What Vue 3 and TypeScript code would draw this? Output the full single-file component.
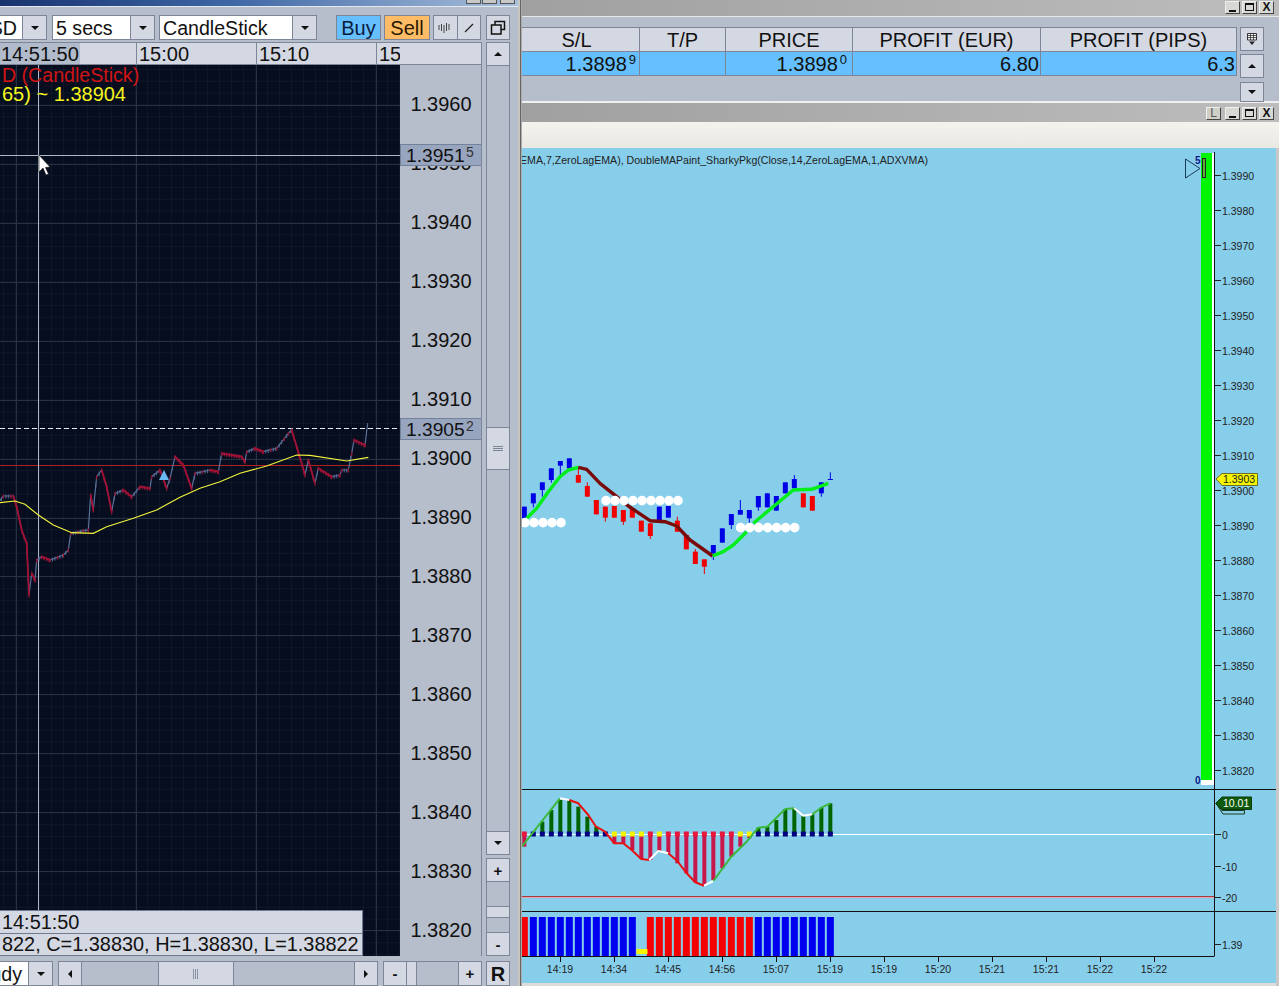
<template>
  <div class="screen">
    <!-- left chart window -->
    <div class="left-win">
      <div class="left-title">
        <div class="win-btns small"><span></span><span></span><span class="far"></span></div>
      </div>
      <div class="toolbar">
        <div class="combo sym"><span class="combo-text end">SD</span><span class="combo-arrow"><i class="down"></i></span></div>
        <div class="combo secs"><span class="combo-text pad">5 secs</span><span class="combo-arrow"><i class="down"></i></span></div>
        <div class="combo style"><span class="combo-text pad">CandleStick</span><span class="combo-arrow"><i class="down"></i></span></div>
        <button class="trade buy">Buy</button>
        <button class="trade sell">Sell</button>
        <div class="tools">
          <span class="tool">
            <svg width="14" height="12" viewBox="0 0 14 12"><path d="M1 3v5M3.500 2v7M6 3v8M8.500 1v8M11 2v6" stroke="#444" fill="none" /></svg>
          </span>
          <span class="tool">
            <svg width="12" height="12" viewBox="0 0 12 12"><path d="M2 10L10 2" stroke="#222" stroke-width="1.200" fill="none" /></svg>
          </span>
        </div>
        <span class="tool restore">
          <svg width="16" height="16" viewBox="0 0 16 16"><path d="M5 5V1.500H14.500V9.500H11M1.500 5H11V14H1.500Z" stroke="#111" stroke-width="1.500" fill="none" /></svg>
        </span>
      </div>
      <div class="chart-body">
        <div class="chart-col">
          <div class="time-row">
            <span class="time-cell hl">14:51:50</span>
            <span class="time-cell t2">15:00</span>
            <span class="time-cell t3">15:10</span>
            <span class="time-cell t4">15</span>
          </div>
          <div class="plot-row">
            <div class="plot">
              <svg class="plot-svg" width="400" height="891" viewBox="0 65 400 891">
                <defs>
                  <pattern id="minor" x="4" y="11" width="12" height="11.800" patternUnits="userSpaceOnUse">
                    <path d="M12 0V11.800M0 11.800H12" stroke="#16202f" fill="none" />
                  </pattern>
                </defs>
                <rect x="0" y="65" width="400" height="891" fill="#050d1e" />
                <rect x="0" y="65" width="400" height="891" fill="url(#minor)" />
                <path v-for="x in majorX" :key="x" :d="`M${x} 65V956`" stroke="#263242" />
                <path v-for="y in majorY" :key="y" :d="`M0 ${y}H400`" stroke="#263242" />
                <path d="M0 465.500H400" stroke="#b02020" />
                <path d="M0 428.500H400" stroke="#e8ecf4" stroke-dasharray="5 3" />
                <path d="M0 155.500H400" stroke="#aeb6c8" />
                <path d="M38.500 65V956" stroke="#aeb6c8" />
                <path :d="priceUp" stroke="#5c7199" stroke-width="1.200" fill="none" />
                <path :d="ticksUp" stroke="#566a92" stroke-width="1" fill="none" />
                <path :d="ticksDown" stroke="#8f1535" stroke-width="1.400" fill="none" />
                <path :d="priceDown" stroke="#a30f33" stroke-width="1.800" fill="none" />
                <polyline :points="maPoints" stroke="#f4f43c" stroke-width="1.100" fill="none" />
                <path d="M164 470L169 480H159Z" fill="#69b8f0" />
                <path d="M39 155V172L43 168L46 175L48.500 174L45.500 167.500L50 167Z" fill="#fff" stroke="#111" stroke-width="0.600" />
              </svg>
              <div class="legend">
                <div class="legend-red">D (CandleStick)</div>
                <div class="legend-yellow">65) ~ 1.38904</div>
              </div>
              <div class="tooltip">
                <div class="tip-row">14:51:50</div>
                <div class="tip-row">822, C=1.38830, H=1.38830, L=1.38822</div>
              </div>
            </div>
            <svg class="axis-svg" width="81" height="891" viewBox="400 65 81 891">
              <text v-for="t in priceLabels" :key="t.label" x="441" :y="t.y + 7" class="axis-text" text-anchor="middle">{{ t.label }}</text>
              <g v-for="b in priceBoxes" :key="b.y">
                <rect x="400.500" :y="b.y" width="81" height="21" fill="#98a5bf" stroke="#74819a" />
                <text x="406" :y="b.y + 17" class="axis-text box">{{ b.text }}</text>
                <text x="466" :y="b.y + 12" class="axis-sup">{{ b.sup }}</text>
              </g>
            </svg>
          </div>
        </div>
        <div class="vscroll">
          <span class="sbtn up"><i class="upa"></i></span>
          <div class="vtrack">
            <span class="vthumb"><svg width="12" height="6" viewBox="0 0 12 6"><path d="M1 .5H11M1 2.500H11M1 4.500H11" stroke="#7b8494" /></svg></span>
          </div>
          <span class="sbtn"><i class="down"></i></span>
          <span class="sbtn plus">+</span>
          <div class="ztrack"><span class="zthumb"></span></div>
          <span class="sbtn minus">-</span>
        </div>
      </div>
      <div class="bottom-row">
        <div class="combo study"><span class="combo-text end">udy</span><span class="combo-arrow"><i class="down"></i></span></div>
        <div class="hscroll">
          <span class="hbtn"><i class="lefta"></i></span>
          <div class="htrack">
            <span class="hthumb"><svg width="6" height="12" viewBox="0 0 6 12"><path d="M.5 1V11M2.500 1V11M4.500 1V11" stroke="#8a93a3" /></svg></span>
          </div>
          <span class="hbtn"><i class="righta"></i></span>
        </div>
        <div class="hzoom">
          <span class="hbtn bold">-</span>
          <span class="hz-small"></span>
          <span class="hz-fill"></span>
          <span class="hbtn bold">+</span>
        </div>
        <span class="rbtn">R</span>
      </div>
    </div>

    <div class="divider"></div>

    <div class="right-side">
      <!-- positions window -->
      <div class="title-bar top">
        <div class="win-btns"><span class="b-min"></span><span class="b-max"></span><span class="b-close">X</span></div>
      </div>
      <div class="positions">
        <div class="pos-table">
          <div class="pos-row head">
            <span v-for="c in columns" :key="c.name" class="pos-cell" :style="{ width: c.w + 'px' }">{{ c.name }}</span>
          </div>
          <div class="pos-row data">
            <span v-for="c in columns" :key="c.name" class="pos-cell" :style="{ width: c.w + 'px' }">{{ c.val }}<sup v-if="c.sup">{{ c.sup }}</sup></span>
          </div>
        </div>
        <div class="pos-side">
          <span class="pos-btn">
            <svg width="12" height="14" viewBox="0 0 12 14"><path d="M1.500 1.500H10.500V8H1.500Z" fill="#eee" stroke="#222" stroke-width="0.900" /><path d="M1.500 3.500H10.500M1.500 5.500H10.500M4.500 1.500V8M7.500 1.500V8" stroke="#222" stroke-width="0.700" fill="none" /><path d="M3 9.500H9L6 13Z" fill="#222" /></svg>
          </span>
          <span class="pos-btn mid"><i class="upa"></i></span>
          <span class="pos-btn low"><i class="down"></i></span>
        </div>
      </div>
      <!-- chart window -->
      <div class="title-bar second">
        <div class="win-btns"><span class="b-l">L</span><span class="b-min"></span><span class="b-max"></span><span class="b-close">X</span></div>
      </div>
      <div class="light-bar"></div>
      <svg class="main-svg" width="757" height="838" viewBox="522 148 757 838">
        <rect x="522" y="148" width="757" height="838" fill="#87ceeb" />
        <text x="520" y="164" class="study-title">{{ studyTitle }}</text>

        <!-- price panel -->
        <rect x="1201" y="153" width="11" height="627" fill="#00f500" />
        <rect x="1201" y="780" width="13" height="5" fill="#fff" />
        <rect x="1212" y="153" width="2" height="632" fill="#fff" />
        <path d="M1185.500 159L1200 168.500L1185.500 178Z" fill="none" stroke="#1b3a55" />
        <rect x="1202.500" y="158.500" width="3" height="19" fill="#5ab03a" stroke="#222" />
        <text x="1195" y="164" class="blue-num">5</text>
        <text x="1195" y="784" class="blue-num">0</text>

        <g v-for="c in candles" :key="c.x">
          <path :d="`M${c.x} ${c.wt}V${c.wb}`" :stroke="c.col" stroke-width="1" />
          <rect :x="c.x - 2.500" :y="c.t" width="5" :height="c.b - c.t" :fill="c.col" />
        </g>
        <polyline v-for="(l, i) in maLines" :key="i" :points="l.pts" :stroke="l.col" stroke-width="3.400" fill="none" stroke-linejoin="round" />
        <circle v-for="d in dots" :key="d.x + '-' + d.y" :cx="d.x" :cy="d.y" r="4.800" fill="#fff" />

        <!-- oscillator panel -->
        <path d="M522 789.500H1276M522 911.500H1276M522 956.500H1214" stroke="#111" />
        <path d="M522 834.500H1214" stroke="#fff" />
        <path d="M522 896.500H1214" stroke="#a83a3a" />
        <path d="M522 897.500H1214" stroke="#e59fb2" />
        <path v-for="h in hist" :key="h.x" :d="`M${h.x} ${h.y}V834`" :stroke="h.col" stroke-width="4" />
        <rect v-for="b in baseline" :key="b.x" :x="b.x - 2.500" y="831.500" width="5" height="5" :fill="b.col" />
        <polyline v-for="(l, i) in oscLines" :key="i" :points="l.pts" :stroke="l.col" stroke-width="2" fill="none" stroke-linejoin="round" />

        <!-- blocks -->
        <rect v-for="b in blocks" :key="b.x" :x="b.x - 3.500" y="917" width="7" height="39" :fill="b.col" />
        <rect x="636.500" y="949" width="11" height="5" fill="#f5f500" />

        <!-- y axis -->
        <path d="M1214.500 152V956.500" stroke="#111" />
        <g v-for="t in rightTicks" :key="t.label">
          <path :d="`M1215 ${t.y - 0.500}H1221`" stroke="#222" />
          <text x="1222" :y="t.y + 4" class="right-text">{{ t.label }}</text>
        </g>

        <!-- price tags -->
        <path d="M1216 479L1222 473.500H1257.500V485.500H1222Z" fill="#f5f500" stroke="#6b6b2a" />
        <text x="1223" y="483" class="tag-text">1.3903</text>
        <path d="M1216.500 804L1222 810.500H1244.500V814H1223Z" fill="none" stroke="#1d3a1d" />
        <path d="M1215.500 803.500L1222 797H1251.500V809.500H1222Z" fill="#0d5a0d" stroke="#0a3a0a" />
        <text x="1223" y="807" class="tag-text white">10.01</text>

        <!-- time axis -->
        <g v-for="t in timeTicks" :key="t.x">
          <path :d="`M${t.x + 0.500} 956V962`" stroke="#111" />
          <text :x="t.x" y="973" class="right-text" text-anchor="middle">{{ t.label }}</text>
        </g>
        <rect x="522" y="983" width="757" height="3" fill="#dcdcd8" />
        <rect x="1276" y="148" width="3" height="838" fill="#c8c8c8" />
      </svg>
    </div>
  </div>
</template>

<script setup lang="ts">
type Pt = [number, number]

const majorX = [16.5, 136.5, 256.5, 376.5]
const majorY = Array.from({ length: 15 }, (_, i) => Math.round(105 + i * 58.93) + 0.5)

// price trace, read off in zoomed coordinates (x/3, 410 + y/3)
const rawPrice: Pt[] = [
  [-3, 275], [10, 258], [40, 258], [50, 290], [65, 360], [80, 400], [87, 555], [95, 490], [105, 510], [110, 450],
  [125, 440], [150, 450], [190, 435], [205, 420], [212, 370], [250, 362], [265, 360], [272, 255], [280, 300], [290, 200],
  [305, 180], [320, 230], [335, 305], [345, 250], [370, 240], [395, 260], [420, 230], [450, 235], [455, 200], [480, 180],
  [500, 235], [510, 205], [525, 140], [550, 165], [575, 235], [585, 190], [630, 180], [655, 185], [665, 130], [725, 140],
  [735, 155], [740, 125], [765, 115], [790, 125], [830, 115], [865, 70], [875, 60], [890, 110], [915, 195], [925, 150],
  [945, 220], [955, 175], [995, 200], [1020, 195], [1025, 180], [1045, 180], [1055, 130], [1062, 90], [1095, 105], [1103, 40]
]
const price: Pt[] = rawPrice.map(([x, y]) => [x / 3, 410 + y / 3])

const priceUp = 'M' + price.map(p => p.join(' ')).join('L')
let down = ''
let tUp = ''
let tDown = ''
for (let i = 1; i < price.length; i++) {
  const [x0, y0] = price[i - 1]
  const [x1, y1] = price[i]
  if (y1 > y0) down += `M${x0} ${y0}L${x1} ${y1}`
  // little bars so the trace has the same busy look
  let n = 0
  for (let x = x0; x < x1; x += 2.5) {
    const y = y0 + ((y1 - y0) * (x - x0)) / (x1 - x0)
    const seg = `M${x.toFixed(1)} ${(y - 1.5).toFixed(1)}V${(y + 2.5).toFixed(1)}`
    if (n % 3 === 0 || y1 > y0) tDown += seg
    else tUp += seg
    n++
  }
}
const priceDown = down
const ticksUp = tUp
const ticksDown = tDown

const rawMa: Pt[] = [
  [0, 278], [45, 273], [75, 283], [115, 315], [160, 345], [215, 368], [280, 370], [320, 350], [400, 325], [470, 300],
  [540, 262], [600, 235], [660, 215], [720, 190], [800, 168], [890, 135], [930, 136], [1040, 153], [1105, 142]
]
const maPoints = rawMa.map(([x, y]) => `${x / 3},${410 + y / 3}`).join(' ')

const priceLabels = Array.from({ length: 15 }, (_, i) => ({
  label: (1.396 - i * 0.001).toFixed(4),
  y: 104.4 + i * 58.97
}))
const priceBoxes = [
  { y: 144.5, text: '1.3951', sup: '5' },
  { y: 418.5, text: '1.3905', sup: '2' }
]

const columns = [
  { name: 'S/L', w: 118, val: '1.3898', sup: '9' },
  { name: 'T/P', w: 86, val: '', sup: '' },
  { name: 'PRICE', w: 127, val: '1.3898', sup: '0' },
  { name: 'PROFIT (EUR)', w: 188, val: '6.80', sup: '' },
  { name: 'PROFIT (PIPS)', w: 196, val: '6.3', sup: '' }
]

const studyTitle = 'EMA,7,ZeroLagEMA), DoubleMAPaint_SharkyPkg(Close,14,ZeroLagEMA,1,ADXVMA)'

// zoom 4 coordinates: page = 520 + x/3, 450 + y/3
const B = '#0000e6'
const R = '#f00000'
const rawCandles: [number, number, number, number, number, string][] = [
  [13, 170, 205, 170, 205, B], [40, 130, 160, 130, 172, B], [67, 97, 120, 97, 140, B], [94, 55, 90, 55, 98, B],
  [121, 33, 47, 33, 75, B], [148, 25, 55, 25, 55, B], [175, 75, 98, 55, 98, R], [202, 108, 140, 97, 140, R],
  [229, 150, 193, 150, 193, R], [256, 170, 203, 170, 215, R], [283, 168, 203, 168, 203, R], [310, 180, 215, 180, 225, R],
  [337, 175, 203, 175, 203, R], [364, 212, 245, 212, 245, R], [391, 220, 258, 220, 267, R], [418, 170, 212, 170, 212, B],
  [445, 168, 203, 168, 203, B], [472, 212, 245, 200, 245, R], [499, 255, 298, 255, 298, R], [526, 305, 342, 297, 342, R],
  [553, 328, 350, 328, 372, R], [580, 285, 310, 285, 330, B], [607, 235, 278, 235, 278, B], [634, 192, 225, 192, 237, B],
  [661, 180, 194, 150, 194, B], [688, 180, 205, 180, 220, B], [715, 138, 172, 138, 182, B], [742, 130, 172, 130, 172, B],
  [769, 138, 182, 138, 182, B], [796, 97, 130, 97, 130, B], [823, 87, 115, 75, 115, B], [850, 130, 172, 130, 172, R],
  [877, 138, 182, 138, 182, R], [904, 97, 130, 97, 140, B], [931, 87, 90, 67, 90, B]
]
const candles = rawCandles.map(([x, t, b, wt, wb, col]) => ({
  x: 520 + x / 3,
  t: 450 + t / 3,
  b: 450 + b / 3,
  wt: 450 + wt / 3,
  wb: 450 + wb / 3,
  col
}))

const toPts = (pts: Pt[], oy: number) => pts.map(([x, y]) => `${(520 + x / 3).toFixed(1)},${(oy + y / 3).toFixed(1)}`).join(' ')

const maLines = [
  { col: '#00ee1a', pts: toPts([[20, 205], [50, 175], [85, 125], [120, 80], [145, 60], [175, 52]], 450) },
  { col: '#7a0a0a', pts: toPts([[175, 52], [200, 58], [240, 100], [290, 140], [325, 168], [390, 212], [435, 215], [470, 228], [510, 270], [578, 318]], 450) },
  { col: '#00ee1a', pts: toPts([[578, 318], [610, 305], [640, 285], [680, 245]], 450) },
  { col: '#00ee1a', pts: toPts([[700, 220], [820, 120], [875, 118], [925, 100]], 450) }
]

const dotRow = (y: number, start: number, n: number) =>
  Array.from({ length: n }, (_, i) => ({ x: 520 + (start + i * 27) / 3, y: 450 + y / 3 }))
const dots = [...dotRow(218, 15, 5), ...dotRow(152, 258, 9), ...dotRow(233, 662, 7)]

// oscillator, zoom 5 coordinates: page = 520 + x/3, 785 + y/3
const GRN = '#006400'
const CRM = '#c8174a'
const histTops: [number, number, string][] = [
  [13, 185, CRM], [40, 150, GRN], [67, 110, GRN], [94, 75, GRN], [121, 45, GRN], [148, 45, GRN], [175, 65, GRN], [202, 95, GRN], [229, 125, GRN],
  [283, 175, CRM], [310, 175, CRM], [337, 195, CRM], [364, 222, CRM], [391, 225, CRM], [418, 198, CRM], [445, 205, CRM], [472, 235, CRM],
  [499, 265, CRM], [526, 292, CRM], [553, 300, CRM], [580, 285, CRM], [607, 250, CRM], [634, 215, CRM], [661, 185, CRM], [688, 160, CRM],
  [715, 128, GRN], [742, 125, GRN], [769, 105, GRN], [796, 72, GRN], [823, 70, GRN], [850, 92, GRN], [877, 88, GRN], [904, 68, GRN], [931, 55, GRN]
]
const hist = histTops.map(([x, y, col]) => ({ x: 520 + x / 3, y: 785 + y / 3, col }))

const NAVY = '#000080'
const YEL = '#f5f500'
const RED = '#e8173c'
const baseColor = (x: number) => {
  if (x < 30) return RED
  if (x <= 256) return NAVY
  if (x <= 418) return x === 391 ? RED : YEL
  if (x <= 634) return RED
  if (x <= 688) return YEL
  return NAVY
}
const baseline = Array.from({ length: 35 }, (_, i) => 13 + i * 27).map(x => ({ x: 520 + x / 3, col: baseColor(x) }))

const oscLines = [
  { col: '#3cb83c', pts: toPts([[5, 185], [120, 40]], 785) },
  { col: '#ffffff', pts: toPts([[120, 40], [148, 45]], 785) },
  { col: '#e81010', pts: toPts([[148, 45], [175, 55], [205, 90], [228, 125], [255, 140], [283, 175], [310, 175], [335, 195], [364, 222], [388, 225]], 785) },
  { col: '#ffffff', pts: toPts([[388, 225], [415, 198], [445, 205]], 785) },
  { col: '#e81010', pts: toPts([[445, 205], [472, 228], [500, 265], [526, 292], [552, 302]], 785) },
  { col: '#ffffff', pts: toPts([[552, 302], [580, 288]], 785) },
  { col: '#3cb83c', pts: toPts([[580, 288], [634, 215], [680, 170], [715, 128], [742, 125], [796, 72], [823, 70]], 785) },
  { col: '#ffffff', pts: toPts([[823, 70], [850, 92], [877, 88]], 785) },
  { col: '#3cb83c', pts: toPts([[877, 88], [904, 68], [931, 55]], 785) }
]

const blocks = Array.from({ length: 35 }, (_, i) => 13 + i * 27)
  .filter(x => x !== 364)
  .map(x => ({ x: 520 + x / 3, col: x < 30 || (x > 364 && x < 700) ? '#f50000' : '#0000f0' }))

const rightTicks = [
  ...Array.from({ length: 18 }, (_, i) => ({ label: (1.399 - i * 0.001).toFixed(4), y: 176 + i * 35 })),
  { label: '0', y: 835 },
  { label: '-10', y: 867 },
  { label: '-20', y: 898 },
  { label: '1.39', y: 945 }
]

const timeLabels = ['14:19', '14:34', '14:45', '14:56', '15:07', '15:19', '15:19', '15:20', '15:21', '15:21', '15:22', '15:22']
const timeTicks = timeLabels.map((label, i) => ({ label, x: 560 + i * 54 }))
</script>

<style>
html, body { margin: 0; padding: 0; background: #87ceeb; overflow: hidden; }
</style>

<style scoped>
.screen {
  display: flex; width: 1279px; height: 986px; overflow: hidden;
  font-family: "Liberation Sans", Arial, sans-serif; color: #111;
}
.left-win { width: 518px; flex: none; background: #b6bdcb; display: flex; flex-direction: column; }
.toolbar, .chart-body, .bottom-row { width: 510px; }
.left-title {
  height: 6px; flex: none; display: flex; justify-content: flex-end; overflow: hidden; padding-right: 3px; box-sizing: content-box;
  background: linear-gradient(90deg, #17336f, #3f67a6 45%, #a9c0dc);
  border-bottom: 1px solid #e4e8ef;
}
.win-btns { display: flex; gap: 1px; }
.win-btns.small span {
  width: 15px; height: 12px; background: #c8c8c8; border: 1px solid #555; margin-top: -8px; box-sizing: border-box;
}
.win-btns.small span.far { margin-left: 2px; }
.toolbar { height: 35px; flex: none; display: flex; align-items: center; padding-top: 6px; box-sizing: border-box; }
.combo {
  display: flex; height: 25px; border: 1px solid #7c8698; box-sizing: border-box; background: #fff; font-size: 19.6px; line-height: 25px; flex: none;
}
.combo.sym { width: 48px; margin-left: -1px; margin-right: 5px; }
.combo.secs { width: 103px; margin-right: 4px; }
.combo.style { width: 158px; margin-right: 19px; }
.combo-text { flex: 1; min-width: 0; overflow: hidden; white-space: nowrap; }
.combo-text.pad { padding-left: 3px; }
.combo-text.end { display: flex; justify-content: flex-end; }
.sym .combo-text.end { padding-right: 5px; }
.study .combo-text.end { padding-right: 6px; }
.combo-arrow {
  width: 23px; flex: none; background: #d4d8e2; border-left: 1px solid #7c8698;
  display: flex; align-items: center; justify-content: center;
}
i.down, i.upa, i.lefta, i.righta { display: block; width: 0; height: 0; border: 4px solid transparent; }
i.down { border-top-color: #111; border-bottom-width: 0; }
i.upa { border-bottom-color: #111; border-top-width: 0; }
i.lefta { border-right-color: #111; border-left-width: 0; }
i.righta { border-left-color: #111; border-right-width: 0; }
.trade {
  height: 25px; padding: 1px 0 0; border: 1px solid #7c8698; font: 20px/21px "Liberation Sans", Arial, sans-serif; color: #0a1a3c; box-sizing: border-box; flex: none;
}
.trade.buy { width: 45px; background: #66bfff; margin-right: 3px; }
.trade.sell { width: 46px; background: #ffbc66; margin-right: 3px; color: #2a1a00; }
.tools { display: flex; width: 48px; height: 25px; margin-right: 5px; border: 1px solid #7c8698; box-sizing: border-box; flex: none; }
.tool { flex: 1; display: flex; align-items: center; justify-content: center; background: #d4d8e2; }
.tool + .tool { border-left: 1px solid #7c8698; }
.tool.restore { flex: none; width: 24px; height: 25px; border: 1px solid #7c8698; box-sizing: border-box; }
.chart-body { height: 914px; flex: none; display: flex; }
.chart-col { width: 482px; flex: none; display: flex; flex-direction: column; border-right: 1px solid #7c8698; box-sizing: border-box; }
.time-row {
  height: 23px; flex: none; display: flex; background: #d4d8e2; font-size: 20px; line-height: 23px; box-sizing: border-box;
  border-top: 1px solid #7c8698; border-bottom: 1px solid #7c8698; overflow: hidden;
}
.time-cell { flex: none; white-space: nowrap; box-sizing: border-box; }
.time-cell.hl { width: 80px; background: #b2bbcc; padding-left: 1px; }
.time-cell.t2 { width: 120px; margin-left: 56px; border-left: 1px solid #7c8698; padding-left: 2px; }
.time-cell.t3 { width: 120px; border-left: 1px solid #7c8698; padding-left: 2px; }
.time-cell.t4 { width: 24px; border-left: 1px solid #7c8698; padding-left: 2px; overflow: hidden; }
.plot-row { flex: 1; display: flex; min-height: 0; }
.plot { position: relative; width: 400px; height: 891px; flex: none; overflow: hidden; }
.plot-svg, .axis-svg { display: block; }
.legend { position: absolute; left: 2px; top: 1px; font-size: 20px; line-height: 19px; }
.legend-red { color: #d01414; font-size: 19.6px; }
.legend-yellow { color: #f5f51e; }
.tooltip {
  position: absolute; left: -1px; top: 845px; width: 364px; height: 46px; box-sizing: border-box;
  background: #d4d8e2; border: 1px solid #6e7a90; font-size: 19.9px; line-height: 23px;
}
.tip-row { height: 22px; padding-left: 2px; white-space: nowrap; }
.tip-row + .tip-row { border-top: 1px solid #6e7a90; line-height: 21px; }
.axis-svg { background: #b6bdcb; }
.axis-text { font: 20px "Liberation Sans", Arial, sans-serif; fill: #111; }
.axis-text.box { font-size: 19.200px; }
.axis-sup { font: 14px "Liberation Sans", Arial, sans-serif; fill: #333; }
.vscroll { width: 24px; margin-left: 4px; display: flex; flex-direction: column; flex: none; }
.sbtn {
  height: 24px; flex: none; display: flex; align-items: center; justify-content: center; box-sizing: border-box;
  background: #d4d8e2; border: 1px solid #7c8698; font-size: 15px; font-weight: 700;
}
.vtrack { flex: 1; position: relative; background: #b6bdcb; border-left: 1px solid #7c8698; border-right: 1px solid #7c8698; box-sizing: border-box; }
.vthumb {
  position: absolute; left: -1px; right: -1px; top: 361px; height: 43px; box-sizing: border-box;
  background: #d4d8e2; border: 1px solid #7c8698; display: flex; align-items: center; justify-content: center;
}
.sbtn.plus { margin-top: 3px; }
.ztrack { height: 50px; flex: none; position: relative; background: #b6bdcb; border-left: 1px solid #7c8698; border-right: 1px solid #7c8698; box-sizing: border-box; }
.zthumb { position: absolute; left: 0; right: 0; top: 24px; height: 10px; background: #d4d8e2; border-top: 1px solid #7c8698; border-bottom: 1px solid #7c8698; }
.bottom-row { height: 25px; flex: none; display: flex; margin-top: 5px; }
.combo.study { width: 54px; margin-left: -1px; margin-right: 5px; }
.hscroll { display: flex; width: 320px; margin-right: 5px; height: 25px; flex: none; }
.hbtn {
  width: 24px; flex: none; display: flex; align-items: center; justify-content: center; background: #d4d8e2;
  border: 1px solid #7c8698; box-sizing: border-box; font-size: 15px; font-weight: 700;
}
.htrack { flex: 1; position: relative; background: #b6bdcb; border-top: 1px solid #7c8698; border-bottom: 1px solid #7c8698; box-sizing: border-box; }
.hthumb {
  position: absolute; left: 76px; top: -1px; bottom: -1px; width: 76px; background: #d4d8e2; border: 1px solid #7c8698; box-sizing: border-box;
  display: flex; align-items: center; justify-content: center;
}
.hzoom { display: flex; width: 99px; margin-right: 4px; height: 25px; flex: none; }
.hz-small { width: 10px; background: #d4d8e2; border: 1px solid #7c8698; border-left: 0; box-sizing: border-box; }
.hz-fill { flex: 1; background: #b6bdcb; border-top: 1px solid #7c8698; border-bottom: 1px solid #7c8698; box-sizing: border-box; }
.rbtn {
  width: 24px; height: 25px; box-sizing: border-box; background: #d4d8e2; border: 1px solid #7c8698;
  font-size: 20px; font-weight: 700; text-align: center; line-height: 24px; flex: none;
}
.divider {
  width: 4px; flex: none;
  background: linear-gradient(90deg, #c8c8c0 0 2px, #666 2px 3px, #aaa 3px 4px);
}
.right-side { flex: 1; min-width: 0; display: flex; flex-direction: column; }
.title-bar {
  flex: none; display: flex; justify-content: flex-end; align-items: center;
  background: linear-gradient(90deg, #a0a0a0, #bdbdbd);
}
.title-bar.top { height: 17px; border-bottom: 1px solid #e8e8e8; padding-right: 5px; box-sizing: border-box; align-items: flex-start; padding-top: 1px; }
.title-bar.second { height: 19px; padding-right: 5px; box-sizing: border-box; padding-top: 1px; }
.title-bar .win-btns { gap: 2px; }
.title-bar .win-btns span {
  display: block; width: 15px; height: 13px; box-sizing: border-box; background: #d8d8d4;
  border: 1px solid #f0f0f0; border-right-color: #444; border-bottom-color: #444;
  font-size: 12px; line-height: 11px; text-align: center; font-weight: 700; position: relative;
}
.b-min::after { content: ''; position: absolute; left: 3px; bottom: 1px; width: 7px; height: 2px; background: #111; }
.b-max::after { content: ''; position: absolute; left: 2px; top: 1px; width: 9px; height: 8px; border: 1px solid #111; border-top-width: 2px; box-sizing: border-box; }
.title-bar .win-btns span.b-l { color: #555; background: #cfcfc6; font-weight: 400; margin-right: 2px; }
.positions {
  height: 86px; flex: none; display: flex; background: #b6bdcb; padding-top: 10px; box-sizing: border-box; border-bottom: 2px solid #f0f0f0;
}
.pos-table { width: 715px; flex: none; margin-right: 3px; }
.pos-row { display: flex; height: 24px; box-sizing: border-box; border-top: 1px solid #7c8698; }
.pos-row.head { background: #d4d8e2; }
.pos-row.data { background: #66c0ff; border-bottom: 1px solid #7c8698; height: 25px; }
.pos-cell {
  flex: none; box-sizing: border-box; border-right: 1px solid #7c8698; font-size: 20px; line-height: 25px; white-space: nowrap; overflow: hidden;
}
.head .pos-cell { text-align: center; }
.head .pos-cell:first-child { padding-right: 8px; }
.data .pos-cell { text-align: right; padding-right: 1px; }
.data .pos-cell:nth-child(1) { padding-right: 3px; }
.data .pos-cell:nth-child(3) { padding-right: 5px; }
.pos-cell sup { font-size: 13px; line-height: 0; vertical-align: 7px; margin-left: 2px; }
.pos-side { width: 24px; display: flex; flex-direction: column; }
.pos-btn {
  height: 24px; flex: none; box-sizing: border-box; background: #d4d8e2; border: 1px solid #7c8698;
  display: flex; align-items: center; justify-content: center;
}
.pos-btn.mid { margin-top: 3px; }
.pos-btn.low { margin-top: 4px; height: 20px; }
.light-bar { height: 26px; flex: none; background: linear-gradient(#f4f3ee, #e9e8e2); }
.main-svg { display: block; flex: none; }
.study-title { font: 10.600px "Liberation Sans", Arial, sans-serif; fill: #222; }
.blue-num { font: 700 10px "Liberation Sans", Arial, sans-serif; fill: #0a1a8a; }
.right-text { font: 10.500px "Liberation Sans", Arial, sans-serif; fill: #222; }
.tag-text { font: 10.500px "Liberation Sans", Arial, sans-serif; fill: #222; }
.tag-text.white { fill: #fff; }
</style>
